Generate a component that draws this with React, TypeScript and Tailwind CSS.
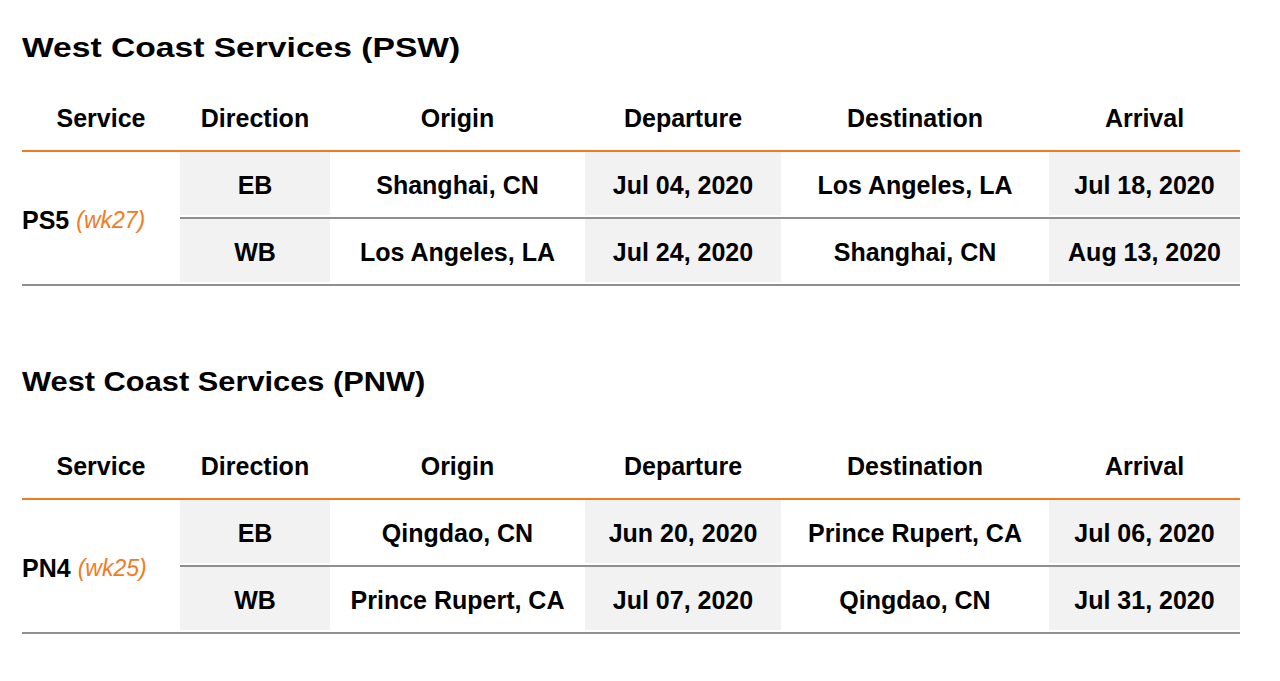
const columns = ["Service", "Direction", "Origin", "Departure", "Destination", "Arrival"]

interface Leg {
  direction: string;
  origin: string;
  departure: string;
  destination: string;
  arrival: string;
}

interface Schedule {
  title: string;
  titleClass: string;
  sectionClass: string;
  headerClass: string;
  service: string;
  week: string;
  legs: Leg[];
}

const schedules: Schedule[] = [
  {
    title: "West Coast Services (PSW)",
    titleClass: "scale-x-[1.2]",
    sectionClass: "pt-[32px]",
    headerClass: "mt-[20px]",
    service: "PS5",
    week: "(wk27)",
    legs: [
      { direction: "EB", origin: "Shanghai, CN", departure: "Jul 04, 2020", destination: "Los Angeles, LA", arrival: "Jul 18, 2020" },
      { direction: "WB", origin: "Los Angeles, LA", departure: "Jul 24, 2020", destination: "Shanghai, CN", arrival: "Aug 13, 2020" },
    ],
  },
  {
    title: "West Coast Services (PNW)",
    titleClass: "scale-x-[1.1]",
    sectionClass: "pt-[80px]",
    headerClass: "mt-[34px]",
    service: "PN4",
    week: "(wk25)",
    legs: [
      { direction: "EB", origin: "Qingdao, CN", departure: "Jun 20, 2020", destination: "Prince Rupert, CA", arrival: "Jul 06, 2020" },
      { direction: "WB", origin: "Prince Rupert, CA", departure: "Jul 07, 2020", destination: "Qingdao, CN", arrival: "Jul 31, 2020" },
    ],
  },
]

function LegRow({ leg }: { leg: Leg }) {
  return (
    <div className="grid h-[63px] grid-cols-[150px_255px_196px_268px_191px] items-stretch">
      <div className="flex items-center justify-center bg-[#f2f2f2] pt-[4px]">{leg.direction}</div>
      <div className="flex items-center justify-center pt-[4px]">{leg.origin}</div>
      <div className="flex items-center justify-center bg-[#f2f2f2] pt-[4px]">{leg.departure}</div>
      <div className="flex items-center justify-center pt-[4px]">{leg.destination}</div>
      <div className="flex items-center justify-center bg-[#f2f2f2] pt-[4px]">{leg.arrival}</div>
    </div>
  )
}

function ScheduleTable({ schedule }: { schedule: Schedule }) {
  return (
    <section className={schedule.sectionClass}>
      <h2 className="h-[32px] text-[28px] font-bold leading-[32px]">
        <span className={`inline-block origin-left ${schedule.titleClass}`}>{schedule.title}</span>
      </h2>

      {/* header */}
      <div className={`grid h-[66px] grid-cols-[158px_150px_255px_196px_268px_191px] items-center pt-[4px] ${schedule.headerClass}`}>
        {columns.map((col) => (
          <div key={col} className="text-center">{col}</div>
        ))}
      </div>
      <div className="h-[2px] bg-[#f47a22]" />

      {/* body */}
      <div className="flex">
        <div className="flex w-[158px] items-center pt-[5px]">
          <span>{schedule.service}</span>
          <span className="ml-[7px] text-[23px] font-normal italic text-[#f47a22]">{schedule.week}</span>
        </div>
        <div className="flex-1">
          <LegRow leg={schedule.legs[0]} />
          <div className="h-[2px]" />
          <div className="h-[2px] bg-[#8f8f8f]" />
          <LegRow leg={schedule.legs[1]} />
          <div className="h-[2px]" />
        </div>
      </div>
      <div className="h-[2px] bg-[#8f8f8f]" />
    </section>
  )
}

export default function App() {
  return (
    <div className="h-[681px] w-[1280px] bg-white text-[25px] font-bold text-black" style={{ fontFamily: '"Liberation Sans", Arial, sans-serif' }}>
      <div className="ml-[22px] w-[1218px]">
        {schedules.map((s) => (
          <ScheduleTable key={s.title} schedule={s} />
        ))}
      </div>
    </div>
  )
}
